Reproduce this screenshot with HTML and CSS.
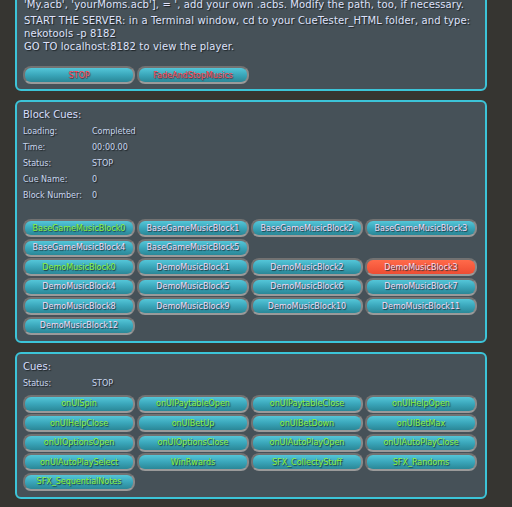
FILE: index.html
```html
<!DOCTYPE html>
<html lang="en">
<head>
    <meta charset="UTF-8">
    <title>CueTester</title>
    <link rel="stylesheet" href="styles.css">
</head>
<body>
    <div class="wrap">
        <div class="panel panel-intro">
            <p>'My.acb', 'yourMoms.acb'], = ', add your own .acbs. Modify the path, too, if necessary.</p>
            <p>START THE SERVER: in a Terminal window, cd to your CueTester_HTML folder, and type:</p>
            <p>nekotools -p 8182</p>
            <p>GO TO localhost:8182 to view the player.</p>
            <div class="btn-grid top-btns">
                <button class="btn red">STOP</button>
                <button class="btn red">FadeAndStopMusics</button>
            </div>
        </div>

        <div class="panel">
            <h3>Block Cues:</h3>
            <div class="info">
                <span>Loading:</span><span>Completed</span>
                <span>Time:</span><span>00:00.00</span>
                <span>Status:</span><span>STOP</span>
                <span>Cue Name:</span><span>0</span>
                <span>Block Number:</span><span>0</span>
            </div>
            <div class="btn-grid block-btns">
                <button class="btn green">BaseGameMusicBlock0</button>
                <button class="btn">BaseGameMusicBlock1</button>
                <button class="btn">BaseGameMusicBlock2</button>
                <button class="btn">BaseGameMusicBlock3</button>
                <button class="btn">BaseGameMusicBlock4</button>
                <button class="btn">BaseGameMusicBlock5</button>
            </div>
            <div class="btn-grid">
                <button class="btn green">DemoMusicBlock0</button>
                <button class="btn">DemoMusicBlock1</button>
                <button class="btn">DemoMusicBlock2</button>
                <button class="btn active">DemoMusicBlock3</button>
                <button class="btn">DemoMusicBlock4</button>
                <button class="btn">DemoMusicBlock5</button>
                <button class="btn">DemoMusicBlock6</button>
                <button class="btn">DemoMusicBlock7</button>
                <button class="btn">DemoMusicBlock8</button>
                <button class="btn">DemoMusicBlock9</button>
                <button class="btn">DemoMusicBlock10</button>
                <button class="btn">DemoMusicBlock11</button>
                <button class="btn">DemoMusicBlock12</button>
            </div>
        </div>

        <div class="panel">
            <h3>Cues:</h3>
            <div class="info info-short">
                <span>Status:</span><span>STOP</span>
            </div>
            <div class="btn-grid">
                <button class="btn green">onUISpin</button>
                <button class="btn green">onUIPaytableOpen</button>
                <button class="btn green">onUIPaytableClose</button>
                <button class="btn green">onUIHelpOpen</button>
                <button class="btn green">onUIHelpClose</button>
                <button class="btn green">onUIBetUp</button>
                <button class="btn green">onUIBetDown</button>
                <button class="btn green">onUIBetMax</button>
                <button class="btn green">onUIOptionsOpen</button>
                <button class="btn green">onUIOptionsClose</button>
                <button class="btn green">onUIAutoPlayOpen</button>
                <button class="btn green">onUIAutoPlayClose</button>
                <button class="btn green">onUIAutoPlaySelect</button>
                <button class="btn green">WinRwards</button>
                <button class="btn green">SFX_CollectyStuff</button>
                <button class="btn green">SFX_Randoms</button>
                <button class="btn green">SFX_SequentialNotes</button>
            </div>
        </div>
    </div>
</body>
</html>
```

FILE: styles.css
```css
* {
    margin: 0;
    padding: 0;
    box-sizing: border-box;
}

body {
    background: #363531;
    font-family: 'DejaVu Sans', Verdana, sans-serif;
    color: #dfe2fa;
    overflow: hidden;
}

.wrap {
    width: 472px;
    margin-left: 15px;
    display: flex;
    flex-direction: column;
    gap: 9px;
}

.panel {
    background: #465158;
    border: 2px solid #3cc4d8;
    border-radius: 6px;
    padding: 6px 5px 6px 6px;
    text-shadow: 1px 1px 1px #1c2226;
}

.panel-intro {
    margin-top: -8px;
    padding-top: 4px;
    padding-bottom: 5px;
}

.panel-intro p {
    font-size: 10px;
    line-height: 13px;
    letter-spacing: 0.12px;
    padding-left: 1px;
    white-space: nowrap;
}

.panel-intro p:first-child {
    margin-bottom: 3px;
}

.panel h3 {
    font-size: 10px;
    font-weight: normal;
    line-height: 14px;
    margin-bottom: 2px;
    color: #d6dcfa;
}

.info {
    display: grid;
    grid-template-columns: 69px 1fr;
    font-size: 8px;
    line-height: 16px;
    color: #c9d6ee;
    margin-bottom: 15px;
}

.info-short {
    margin-bottom: 3px;
    line-height: 16px;
}

.btn-grid {
    display: flex;
    flex-wrap: wrap;
    gap: 1.5px 2px;
}

.block-btns {
    margin-bottom: 1.5px;
}

.top-btns {
    margin-top: 13px;
}

.btn {
    width: 112px;
    height: 18px;
    border: 2px solid #727272;
    border-right-color: #8a8a8a;
    border-bottom-color: #9a9a9a;
    border-radius: 8px;
    background: linear-gradient(#54c6d8 0%, #3aa6ba 50%, #2a8797 100%);
    font-family: 'DejaVu Sans', Verdana, sans-serif;
    font-size: 8px;
    letter-spacing: 0;
    color: #f4d8f2;
    text-shadow: 1px 1px 1px #1a3238;
    cursor: pointer;
    white-space: nowrap;
}

.btn.green {
    color: #8cf23a;
}

.btn.red {
    color: #ff4450;
    text-shadow: 1px 1px 1px #5a2830;
}

.btn.active {
    background: linear-gradient(#ff6a4a, #ee4c32);
    color: #f8dcf0;
}
```
